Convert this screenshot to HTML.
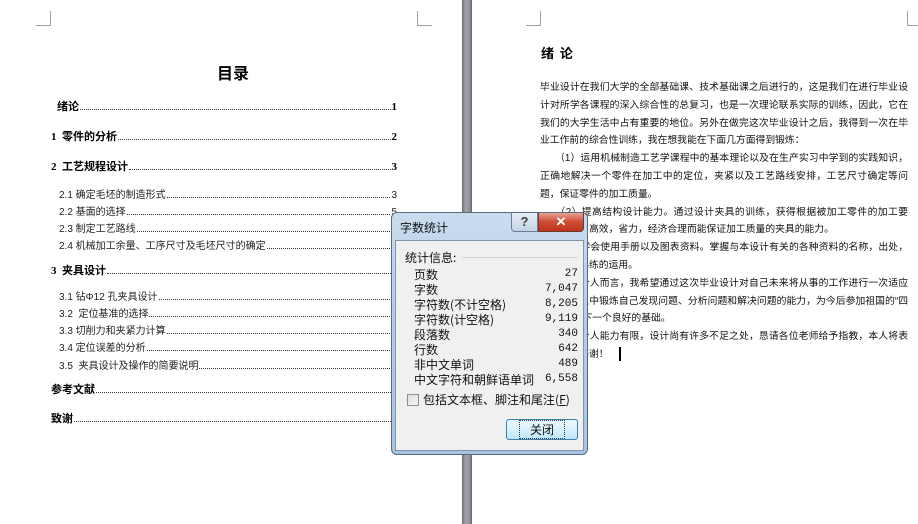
<!DOCTYPE html>
<html><head><meta charset="utf-8"><style>
*{margin:0;padding:0;box-sizing:border-box}
body{width:918px;height:524px;background:#fff;position:relative;overflow:hidden;font-family:"Liberation Serif","Noto Serif CJK SC","Noto Sans CJK SC",serif;color:#000}
.a{position:absolute;white-space:nowrap}
.mk{position:absolute;background:#a0a0a0}
.toc{position:absolute;display:flex;align-items:baseline;font-size:10px;height:14px;line-height:14px;font-family:"Liberation Sans","Noto Sans CJK SC",sans-serif;color:#222}
.toc .d{flex:1;border-bottom:1px dotted #333;margin:0 1px;height:10px}
.b{font-weight:bold;font-size:11px;font-family:"Liberation Serif","Noto Sans CJK SC",serif;color:#000}
.rp{position:absolute;left:540px;width:368px;font-family:"Liberation Sans","Noto Sans CJK SC",sans-serif;font-size:9.8px;line-height:17.8px;color:#111}
.rp div{white-space:nowrap;text-align:justify;text-align-last:justify;height:17.8px}
.rp div.l{text-align-last:left}
.dlg{position:absolute;left:391px;top:212px;width:197px;height:243px;border-radius:6px;background:linear-gradient(#c9dcef,#b7cde6 40%,#aac3e0);border:1px solid #566c86;font-family:"Noto Sans CJK SC",sans-serif}
.in{position:absolute;left:3px;top:27px;width:189px;height:211px;background:#f0f0f0;border:1px solid #7f94ad}
.row{position:absolute;left:18px;width:164px;font-size:12px;line-height:15px;display:flex;justify-content:space-between;color:#111}
.row span:last-child{font-family:"Liberation Mono",monospace;font-size:11px}
</style></head><body>
<div class="mk" style="left:36px;top:25px;width:15px;height:1px"></div>
<div class="mk" style="left:50px;top:11px;width:1px;height:15px"></div>
<div class="mk" style="left:417px;top:11px;width:1px;height:15px"></div>
<div class="mk" style="left:417px;top:25px;width:15px;height:1px"></div>
<div class="mk" style="left:526px;top:25px;width:15px;height:1px"></div>
<div class="mk" style="left:540px;top:11px;width:1px;height:15px"></div>
<div class="mk" style="left:907px;top:11px;width:1px;height:15px"></div>
<div class="mk" style="left:907px;top:25px;width:11px;height:1px"></div>
<div style="position:absolute;left:462px;top:0;width:10px;height:524px;background:linear-gradient(90deg,#6d6f75,#a4a6ab 40%,#8d8f94 80%,#5e6066)"></div>

<div class="a" style="left:217px;top:60px;font-size:16px;font-weight:bold;font-family:'Noto Sans CJK SC',sans-serif">目录</div>
<div class="toc b" style="left:57px;top:100px;width:340px"><span>绪论</span><span class="d"></span><span>1</span></div>
<div class="toc b" style="left:51px;top:130px;width:346px"><span>1&nbsp; 零件的分析</span><span class="d"></span><span>2</span></div>
<div class="toc b" style="left:51px;top:160px;width:346px"><span>2&nbsp; 工艺规程设计</span><span class="d"></span><span>3</span></div>
<div class="toc" style="left:59px;top:188px;width:338px"><span>2.1 确定毛坯的制造形式</span><span class="d"></span><span>3</span></div>
<div class="toc" style="left:59px;top:205px;width:338px"><span>2.2 基面的选择</span><span class="d"></span><span>5</span></div>
<div class="toc" style="left:59px;top:222px;width:338px"><span>2.3 制定工艺路线</span><span class="d"></span><span>6</span></div>
<div class="toc" style="left:59px;top:239px;width:338px"><span>2.4 机械加工余量、工序尺寸及毛坯尺寸的确定</span><span class="d"></span><span>1</span></div>
<div class="toc b" style="left:51px;top:264px;width:346px"><span>3&nbsp; 夹具设计</span><span class="d"></span><span>2</span></div>
<div class="toc" style="left:59px;top:290px;width:338px"><span>3.1 钻Φ12 孔夹具设计</span><span class="d"></span><span>2</span></div>
<div class="toc" style="left:59px;top:307px;width:338px"><span>3.2&nbsp; 定位基准的选择</span><span class="d"></span><span>2</span></div>
<div class="toc" style="left:59px;top:324px;width:338px"><span>3.3 切削力和夹紧力计算</span><span class="d"></span><span>2</span></div>
<div class="toc" style="left:59px;top:341px;width:338px"><span>3.4 定位误差的分析</span><span class="d"></span><span>2</span></div>
<div class="toc" style="left:59px;top:359px;width:338px"><span>3.5&nbsp; 夹具设计及操作的简要说明</span><span class="d"></span><span>2</span></div>
<div class="toc b" style="left:51px;top:383px;width:346px"><span>参考文献</span><span class="d"></span><span>2</span></div>
<div class="toc b" style="left:51px;top:412px;width:346px"><span>致谢</span><span class="d"></span><span>2</span></div>

<div class="a" style="left:541px;top:43px;font-size:13px;font-weight:bold;font-family:'Noto Sans CJK SC',sans-serif">绪&nbsp;&nbsp;论</div>
<div class="rp" style="top:79px">
<div>毕业设计在我们大学的全部基础课、技术基础课之后进行的，这是我们在进行毕业设</div>
<div>计对所学各课程的深入综合性的总复习，也是一次理论联系实际的训练，因此，它在</div>
<div>我们的大学生活中占有重要的地位。另外在做完这次毕业设计之后，我得到一次在毕</div>
<div class="l">业工作前的综合性训练，我在想我能在下面几方面得到锻炼：</div>
<div>　　（1）运用机械制造工艺学课程中的基本理论以及在生产实习中学到的实践知识，</div>
<div>正确地解决一个零件在加工中的定位，夹紧以及工艺路线安排，工艺尺寸确定等问</div>
<div class="l">题，保证零件的加工质量。</div>
<div>　　（2）提高结构设计能力。通过设计夹具的训练，获得根据被加工零件的加工要</div>
<div class="l">求，设计出高效，省力，经济合理而能保证加工质量的夹具的能力。</div>
<div>　　（3）学会使用手册以及图表资料。掌握与本设计有关的各种资料的名称，出处，</div>
<div class="l">能够做到熟练的运用。</div>
<div>　　就我个人而言，我希望通过这次毕业设计对自己未来将从事的工作进行一次适应</div>
<div>性训练，从中锻炼自己发现问题、分析问题和解决问题的能力，为今后参加祖国的“四</div>
<div class="l">化”建设打下一个良好的基础。</div>
<div>　　由于个人能力有限，设计尚有许多不足之处，恳请各位老师给予指教，本人将表</div>
<div class="l">示衷心的感谢！ <span style="display:inline-block;width:2px;height:14px;background:#000;vertical-align:middle;margin-left:8px"></span></div>
</div>

<div class="dlg">
<div class="a" style="left:8px;top:6px;font-size:12px;color:#111">字数统计</div>
<div style="position:absolute;left:119px;top:0;width:27px;height:19px;border:1px solid #6b7d95;border-top:none;border-radius:0 0 0 4px;background:linear-gradient(#e6eef7,#c3d3e6);font:bold 13px 'Liberation Sans',sans-serif;color:#444;text-align:center;line-height:18px">?</div>
<div style="position:absolute;left:146px;top:0;width:46px;height:19px;border:1px solid #6b3a34;border-top:none;border-radius:0 0 4px 0;background:linear-gradient(#e8a193,#cf4b33 50%,#c0341c);font:bold 13px 'Liberation Sans',sans-serif;color:#fff;text-align:center;line-height:18px">✕</div>
<div class="in">
<div class="a" style="left:9px;top:8px;font-size:12px;color:#111">统计信息:</div>
<div style="position:absolute;left:66px;top:16px;width:116px;height:1px;background:#d5d5d5"></div>
<div class="row" style="top:26px"><span>页数</span><span>27</span></div>
<div class="row" style="top:41px"><span>字数</span><span>7,047</span></div>
<div class="row" style="top:56px"><span>字符数(不计空格)</span><span>8,205</span></div>
<div class="row" style="top:71px"><span>字符数(计空格)</span><span>9,119</span></div>
<div class="row" style="top:86px"><span>段落数</span><span>340</span></div>
<div class="row" style="top:101px"><span>行数</span><span>642</span></div>
<div class="row" style="top:116px"><span>非中文单词</span><span>489</span></div>
<div class="row" style="top:131px"><span>中文字符和朝鲜语单词</span><span>6,558</span></div>
<div style="position:absolute;left:11px;top:153px;width:12px;height:12px;border:1px solid #8e8f8f;background:linear-gradient(135deg,#dcdcdc,#f6f6f6)"></div>
<div class="a" style="left:27px;top:150px;font-size:12px;color:#111">包括文本框、脚注和尾注(<u>F</u>)</div>
<div style="position:absolute;left:110px;top:178px;width:72px;height:21px;border:1px solid #3c7fb1;border-radius:3px;background:linear-gradient(#eaf6fd,#d9f0fc 50%,#bee6fd);font-size:12px;text-align:center;line-height:19px;color:#111"><span style="border:1px dotted #333;padding:0 10px">关闭</span></div>
</div>
</div>
</body></html>
